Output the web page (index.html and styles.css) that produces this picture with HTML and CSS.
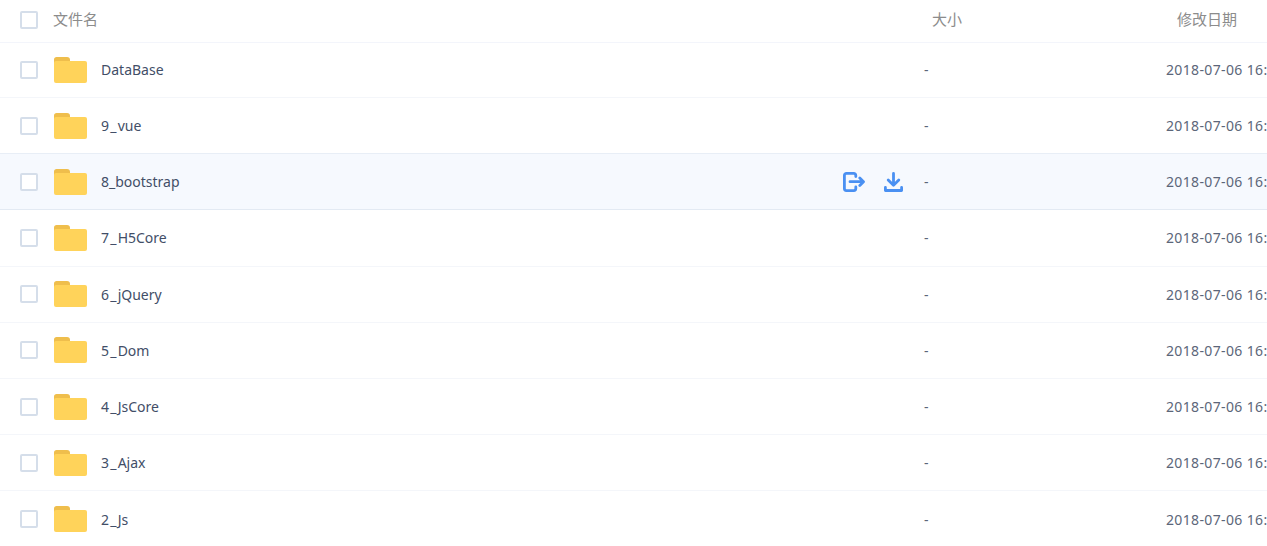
FILE: index.html
```html
<!DOCTYPE html>
<html lang="zh-CN">
<head>
<meta charset="utf-8">
<title>文件列表</title>
<link rel="stylesheet" href="styles.css">
</head>
<body>
<svg class="sprite" width="0" height="0" aria-hidden="true">
  <symbol id="folder" viewBox="0 0 33 26">
    <path fill="#efbe4c" d="M2.500 0h10.500c2 0 3 1 3 3v3H0V2.500C0 1 1 0 2.500 0z"/>
    <rect fill="#ffd35a" x="0" y="4" width="33" height="22" rx="2"/>
  </symbol>
</svg>
<main class="list">
  <div class="row head">
    <span class="check"></span>
    <span class="name-head">文件名</span>
    <span class="size-head">大小</span>
    <span class="date-head">修改日期</span>
  </div>
  <div class="row"><span class="check"></span><svg class="folder"><use href="#folder"/></svg><span class="name">DataBase</span><span class="size">-</span><span class="date">2018-07-06 16:</span></div>
  <div class="row"><span class="check"></span><svg class="folder"><use href="#folder"/></svg><span class="name"><span class="prefix">9_</span>vue</span><span class="size">-</span><span class="date">2018-07-06 16:</span></div>
  <div class="row hover"><span class="check"></span><svg class="folder"><use href="#folder"/></svg><span class="name">8_bootstrap</span>
    <span class="actions">
      <svg class="icon-move" viewBox="0 0 22 20" fill="none" stroke="#4a90f2" stroke-width="2.800" stroke-linecap="round" stroke-linejoin="round"><path d="M12.800 4.500V3.400a2 2 0 0 0-2-2H3.400a2 2 0 0 0-2 2v13.200a2 2 0 0 0 2 2h7.400a2 2 0 0 0 2-2V15"/><path d="M7 9.700h13M16.800 6l3.700 3.700-3.700 3.700"/></svg>
      <svg class="icon-down" viewBox="0 0 19 20" fill="none" stroke="#4a90f2" stroke-width="2.800" stroke-linecap="round" stroke-linejoin="round"><path d="M9.500 1.400v11.600M4.200 8l5.300 5.300L14.800 8"/><path d="M1.400 15.500v3h16.200v-3"/></svg>
    </span>
    <span class="size">-</span><span class="date">2018-07-06 16:</span></div>
  <div class="row"><span class="check"></span><svg class="folder"><use href="#folder"/></svg><span class="name"><span class="prefix">7_</span>H5Core</span><span class="size">-</span><span class="date">2018-07-06 16:</span></div>
  <div class="row"><span class="check"></span><svg class="folder"><use href="#folder"/></svg><span class="name"><span class="prefix">6_</span>jQuery</span><span class="size">-</span><span class="date">2018-07-06 16:</span></div>
  <div class="row"><span class="check"></span><svg class="folder"><use href="#folder"/></svg><span class="name"><span class="prefix">5_</span>Dom</span><span class="size">-</span><span class="date">2018-07-06 16:</span></div>
  <div class="row"><span class="check"></span><svg class="folder"><use href="#folder"/></svg><span class="name"><span class="prefix">4_</span>JsCore</span><span class="size">-</span><span class="date">2018-07-06 16:</span></div>
  <div class="row"><span class="check"></span><svg class="folder"><use href="#folder"/></svg><span class="name"><span class="prefix">3_</span>Ajax</span><span class="size">-</span><span class="date">2018-07-06 16:</span></div>
  <div class="row last"><span class="check"></span><svg class="folder"><use href="#folder"/></svg><span class="name"><span class="prefix">2_</span>Js</span><span class="size">-</span><span class="date">2018-07-06 16:</span></div>
</main>
</body>
</html>
```
FILE: styles.css
```css
html, body {
  margin: 0;
  height: 100%;
  overflow: hidden;
  background: #fff;
}
.sprite {
  display: block;
  height: 0;
}
.list {
  width: 1267px;
  font-family: "Noto Sans", "Noto Sans CJK SC", sans-serif;
  font-size: 14px;
  color: #424e67;
}
.row {
  display: flex;
  align-items: center;
  height: 56.2px;
  box-sizing: border-box;
  padding-left: 20px;
  border-bottom: 1px solid #f4f6fa;
  white-space: nowrap;
}
.row.head {
  height: 43px;
  padding-bottom: 5px;
  border-bottom-color: #f3f5fb;
  color: #8c8c8c;
  font-size: 15px;
}
.row.head .check {
  margin-top: 3px;
}
.row.head + .row {
  height: 55px;
}
.row.head + .row .name,
.row.head + .row .size,
.row.head + .row .date {
  margin-bottom: 2px;
}
.row.hover {
  background: #f6f9fe;
  border-top: 1px solid #e8eef6;
  border-bottom-color: #e3eaf3;
  margin-top: -1px;
  height: 57.2px;
}
.row.last {
  border-bottom: 0;
}
.check {
  flex: none;
  box-sizing: border-box;
  width: 18px;
  height: 18px;
  border: 2px solid #d5deea;
  border-radius: 2px;
  background: #fff;
}
.folder {
  flex: none;
  width: 33px;
  height: 26px;
  margin-left: 16px;
}
.name {
  flex: none;
  margin-left: 14px;
  width: 823px;
}
.prefix {
  letter-spacing: 1.2px;
}
.hover .name {
  width: 0;
}
.actions {
  flex: none;
  display: flex;
  align-items: center;
  gap: 19px;
  width: 823px;
  padding-right: 21px;
  box-sizing: border-box;
  justify-content: flex-end;
}
.icon-move {
  width: 22px;
  height: 20px;
}
.icon-down {
  width: 19px;
  height: 20px;
}
.size {
  flex: none;
  width: 242px;
  color: #5c6679;
}
.date {
  flex: none;
  color: #5c6679;
  letter-spacing: 0.36px;
}
.name-head {
  flex: none;
  margin-left: 15px;
  width: 879px;
}
.size-head {
  flex: none;
  width: 245px;
}
.date-head {
  flex: none;
}
```
